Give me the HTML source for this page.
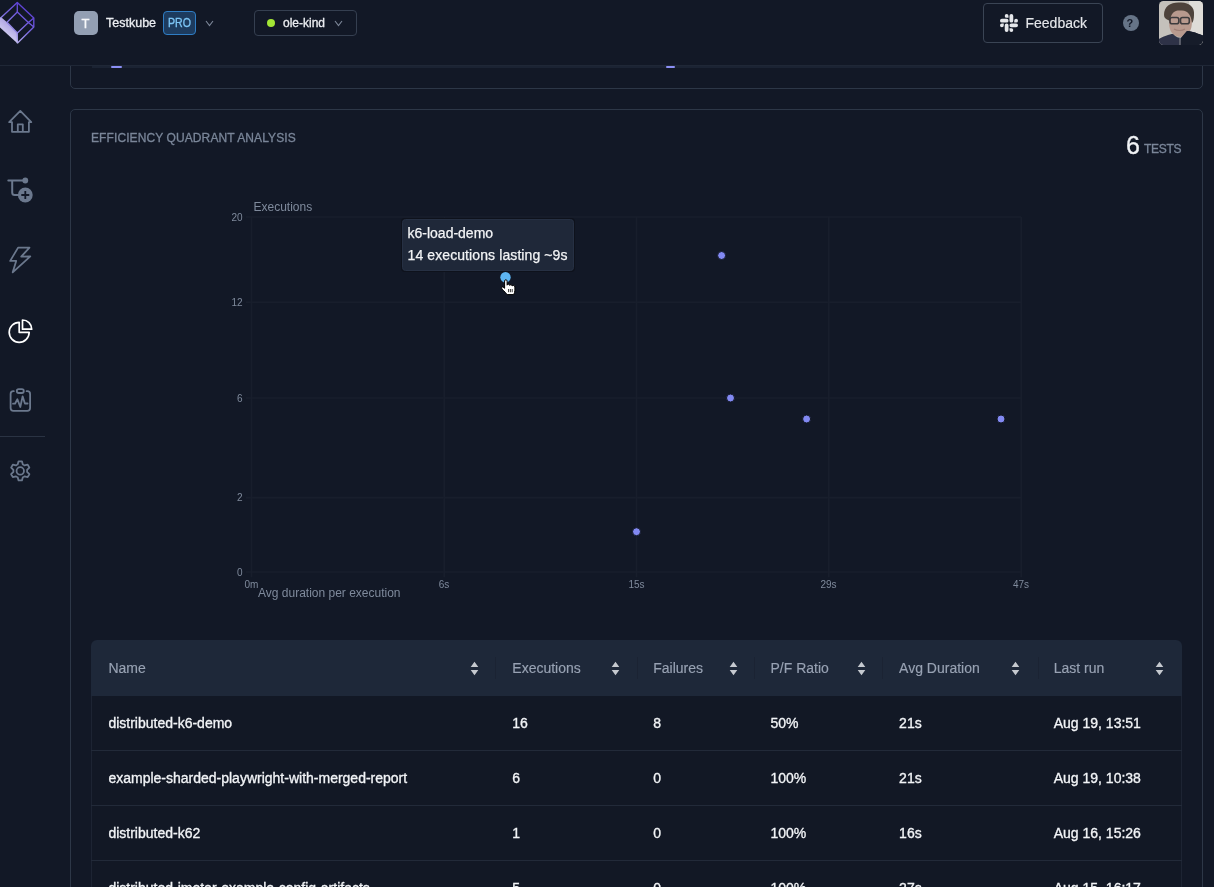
<!DOCTYPE html>
<html><head><meta charset="utf-8">
<style>
*{box-sizing:border-box;margin:0;padding:0}
html,body{width:1214px;height:887px;overflow:hidden;background:#121826;font-family:"Liberation Sans",sans-serif;color:#e5e7eb;-webkit-font-smoothing:antialiased}
#wrap{position:absolute;left:0;top:0;width:1214px;height:887px;will-change:transform}
.abs{position:absolute}
#topbar{position:absolute;left:0;top:0;width:1214px;height:66px;border-bottom:1px solid #232b3a}
.txt{position:absolute;white-space:nowrap;line-height:1}
.md{-webkit-text-stroke:0.3px currentColor}
.sm{-webkit-text-stroke:0.15px currentColor}
.th{top:661px;font-size:14px;color:#98a2b3;-webkit-text-stroke:0.15px currentColor}
.td{font-size:14px;color:#f2f4f7;-webkit-text-stroke:0.32px #f2f4f7}
</style></head>
<body><div id="wrap">
<!-- previous card (cut off) -->
<div class="abs" style="left:70px;top:-20px;width:1133px;height:109px;border:1px solid #2d3747;border-radius:5px"></div>
<div class="abs" style="left:92px;top:66px;width:1088px;height:2px;background:#1b2333"></div>
<div class="abs" style="left:111px;top:66px;width:11px;height:2px;background:#8b8ff5;border-radius:1px"></div>
<div class="abs" style="left:666px;top:66px;width:9px;height:2px;background:#8b8ff5;border-radius:1px"></div>

<!-- top bar -->
<div id="topbar"></div>
<div class="abs" style="left:0;top:0;width:1214px;height:66px;background:#121826;border-bottom:1px solid #1f2736"></div>

<!-- logo -->
<svg class="abs" style="left:0;top:0" width="40" height="48" viewBox="0 0 40 48">
  <defs>
    <linearGradient id="lg1" gradientUnits="userSpaceOnUse" x1="32" y1="8" x2="6" y2="40">
      <stop offset="0" stop-color="#5535d2"/><stop offset="0.55" stop-color="#7e6fe0"/><stop offset="1" stop-color="#c9c4ef"/>
    </linearGradient>
    <linearGradient id="lg2" gradientUnits="userSpaceOnUse" x1="14" y1="24" x2="4" y2="36">
      <stop offset="0" stop-color="#a89ce0"/><stop offset="1" stop-color="#d6d3f3"/>
    </linearGradient>
  </defs>
  <path d="M-1,17.2 L1.2,17.2 L7,22.2 L17.3,33 L17.3,43.3 L-1,26.6 Z" fill="url(#lg2)"/>
  <g fill="none" stroke="url(#lg1)" stroke-width="1.35" stroke-linejoin="round">
    <path d="M0.6,17.9 L17.3,2.4 L33.8,17.9 L33.8,27 L17.3,43.3"/>
    <path d="M17.3,11.9 L28.4,22.6 L17.3,33 L7,22.2 Z"/>
    <path d="M17.3,2.4 V11.9 M28.4,22.6 L33.8,17.9 M28.4,22.6 L33.8,27 M17.3,33 V43.3"/>
  </g>
</svg>

<!-- org -->
<div class="abs" style="left:74px;top:11px;width:24px;height:24px;background:#939fb3;border-radius:5px"></div>
<div class="txt md" style="left:81.5px;top:17px;font-size:13px;color:#f7f8fa">T</div>
<div class="txt md" style="left:106px;top:17px;font-size:12.5px;color:#eceef2">Testkube</div>
<div class="abs" style="left:163px;top:11px;width:33px;height:24px;background:#1d3b5e;border:1px solid #2f7dc4;border-radius:4px"></div>
<div class="txt md" style="left:168px;top:17px;font-size:12px;color:#7cc4f4;transform:scaleX(0.885);transform-origin:0 0">PRO</div>
<svg class="abs" style="left:204px;top:18px" width="11" height="10" viewBox="0 0 11 10"><path d="M2,3 L5.5,7.5 L9,3" fill="none" stroke="#7d8799" stroke-width="1.1"/></svg>

<!-- env -->
<div class="abs" style="left:254px;top:10px;width:103px;height:26px;border:1px solid #353f50;border-radius:4px"></div>
<div class="abs" style="left:267px;top:19px;width:8px;height:8px;background:#a3e635;border-radius:50%"></div>
<div class="txt md" style="left:283px;top:16.5px;font-size:12px;color:#eceef2">ole-kind</div>
<svg class="abs" style="left:333px;top:18px" width="11" height="10" viewBox="0 0 11 10"><path d="M2,3 L5.5,7.5 L9,3" fill="none" stroke="#7d8799" stroke-width="1.1"/></svg>

<!-- feedback -->
<div class="abs" style="left:983px;top:3px;width:120px;height:40px;border:1px solid #3a4454;border-radius:4px"></div>
<svg class="abs" style="left:1000px;top:14px" width="18" height="18" viewBox="0 0 24 24"><path fill="#e5e7eb" d="M5.042 15.165a2.528 2.528 0 0 1-2.52 2.523A2.528 2.528 0 0 1 0 15.165a2.527 2.527 0 0 1 2.522-2.52h2.52v2.52zM6.313 15.165a2.527 2.527 0 0 1 2.521-2.52 2.527 2.527 0 0 1 2.521 2.52v6.313A2.528 2.528 0 0 1 8.834 24a2.528 2.528 0 0 1-2.521-2.522v-6.313zM8.834 5.042a2.528 2.528 0 0 1-2.521-2.52A2.528 2.528 0 0 1 8.834 0a2.528 2.528 0 0 1 2.521 2.522v2.52H8.834zM8.834 6.313a2.528 2.528 0 0 1 2.521 2.521 2.528 2.528 0 0 1-2.521 2.521H2.522A2.528 2.528 0 0 1 0 8.834a2.528 2.528 0 0 1 2.522-2.521h6.312zM18.956 8.834a2.528 2.528 0 0 1 2.522-2.521A2.528 2.528 0 0 1 24 8.834a2.528 2.528 0 0 1-2.522 2.521h-2.522V8.834zM17.688 8.834a2.528 2.528 0 0 1-2.523 2.521 2.527 2.527 0 0 1-2.52-2.521V2.522A2.527 2.527 0 0 1 15.165 0a2.528 2.528 0 0 1 2.523 2.522v6.312zM15.165 18.956a2.528 2.528 0 0 1 2.523 2.522A2.528 2.528 0 0 1 15.165 24a2.527 2.527 0 0 1-2.52-2.522v-2.522h2.52zM15.165 17.688a2.527 2.527 0 0 1-2.52-2.523 2.526 2.526 0 0 1 2.52-2.52h6.313A2.527 2.527 0 0 1 24 15.165a2.528 2.528 0 0 1-2.522 2.523h-6.313z"/></svg>
<div class="txt sm" style="left:1025.5px;top:15.5px;font-size:14px;color:#e5e7eb">Feedback</div>

<!-- help -->
<div class="abs" style="left:1122.5px;top:15px;width:16px;height:16px;background:#667487;border-radius:50%"></div>
<div class="txt" style="left:1126.5px;top:17.5px;font-size:11px;font-weight:bold;color:#121826">?</div>

<!-- avatar -->
<svg class="abs" style="left:1159px;top:1px" width="44" height="44" viewBox="0 0 44 44">
  <defs>
    <clipPath id="av"><rect x="0" y="0" width="44" height="44" rx="4.5"/></clipPath>
    <filter id="bl" x="-10%" y="-10%" width="120%" height="120%"><feGaussianBlur stdDeviation="0.6"/></filter>
  </defs>
  <g clip-path="url(#av)">
    <rect width="44" height="44" fill="#c4c1bb"/>
    <rect x="30" y="0" width="14" height="44" fill="#dedcd8"/>
    <g filter="url(#bl)">
    <path d="M10,10 C10,4 16,7 21,7.5 C28,8 33,10 33,20 C33,29 30,35 22,36 C14,36 10,30 10,22 Z" fill="#b89a8e"/>
    <path d="M5,14 C5,5 12,1 21,1.5 C30,1 36,6 35,14 C35,18 34,21 33,22 C32,14 29,9 22,9.5 C16,9 12,11 11,20 L9,19 C7,18 5,17 5,14 Z" fill="#4e433a"/>
    <rect x="11" y="16.5" width="8.8" height="6.2" rx="2" fill="none" stroke="#3d3a3c" stroke-width="1.6"/>
    <rect x="21.5" y="16.5" width="8.8" height="6.2" rx="2" fill="none" stroke="#3d3a3c" stroke-width="1.6"/>
    <path d="M15,28 C18,30 23,30 26,28" stroke="#a07f75" stroke-width="1.2" fill="none"/>
    <path d="M-4,48 L-4,40 C3,36 10,33 14,33 C17,36 20,37 22,37 L28,30 C33,30 40,33 48,36 L48,48 Z" fill="#2d3346"/>
    <path d="M22,37 L28,30 C33,30 40,33 48,36 L48,48 L21,48 Z" fill="#161a2a"/>
    <path d="M21,36 V44" stroke="#8a8a90" stroke-width="1"/>
    </g>
  </g>
</svg>

<!-- sidebar icons -->
<svg class="abs" style="left:0;top:0" width="50" height="500" viewBox="0 0 50 500">
  <g fill="none" stroke="#6b788d" stroke-width="1.8" stroke-linejoin="round" stroke-linecap="round">
    <!-- home -->
    <path d="M12,122.2 H9.2 L20.3,110.9 L31.3,122.2 H28.9 V131.8 H12 Z M17.8,131.8 V124.3 H22.8 V131.8"/>
    <!-- tests+ -->
    <path d="M8.3,180.5 H24 M12.2,180.5 V192.5 Q12.2,195 14.7,195 H19" stroke-width="2"/>
    <!-- lightning -->
    <path d="M18.1,247.6 L29.5,247.6 L21.2,256.6 L30.3,256.3 L12.7,272.3 L16.2,260.9 L10.2,260.9 Z"/>
    <!-- clipboard -->
    <path d="M13.8,391.2 H13.4 Q10.6,391.2 10.6,394 V408 Q10.6,410.8 13.4,410.8 H27.3 Q30.1,410.8 30.1,408 V394 Q30.1,391.2 27.3,391.2 H26.6"/>
    <rect x="16.8" y="389.1" width="7" height="3.9" rx="1.95"/>
    <path d="M13,403.7 H15 L17.4,399.3 L20.3,407 L22.6,396.4 L24.9,403.5 H27.6"/>
    <!-- gear -->
    <path d="M17.67,464.50 L18.57,461.35 L21.93,461.35 L22.83,464.50 A6.9,6.9 0 0 1 24.50,465.46 L27.68,464.66 L29.37,467.58 L27.08,469.94 A6.9,6.9 0 0 1 27.08,471.86 L29.37,474.22 L27.68,477.14 L24.50,476.34 A6.9,6.9 0 0 1 22.83,477.30 L21.93,480.45 L18.57,480.45 L17.67,477.30 A6.9,6.9 0 0 1 16.00,476.34 L12.82,477.14 L11.13,474.22 L13.42,471.86 A6.9,6.9 0 0 1 13.42,469.94 L11.13,467.58 L12.82,464.66 L16.00,465.46 A6.9,6.9 0 0 1 17.67,464.50 Z"/>
    <circle cx="20.25" cy="470.9" r="3.7"/>
  </g>
  <circle cx="25.3" cy="180.5" r="2.9" fill="#6b788d"/>
  <circle cx="25.3" cy="195" r="7.4" fill="#6b788d"/>
  <path d="M25.3,191 V199 M21.3,195 H29.3" stroke="#121826" stroke-width="1.8"/>
  <!-- pie active -->
  <g fill="none" stroke="#ffffff" stroke-width="1.7" stroke-linejoin="round">
    <path d="M19.2,322.3 V332.3 H29.2 A10,10 0 1 1 19.2,322.3 Z"/>
    <path d="M22.5,320 V329.2 H31.7 A9.2,9.2 0 0 0 22.5,320 Z"/>
  </g>
  <rect x="0" y="436" width="45" height="1" fill="#2a3343"/>
</svg>

<!-- chart card -->
<div class="abs" style="left:70px;top:109px;width:1133px;height:800px;border:1px solid #2d3747;border-radius:5px"></div>
<div class="txt md" style="left:91px;top:132px;font-size:12px;letter-spacing:0.1px;color:#7a8699">EFFICIENCY QUADRANT ANALYSIS</div>
<div class="txt md" style="left:1126px;top:133px;font-size:25px;color:#f1f3f6">6</div>
<div class="txt md" style="left:1144px;top:143px;font-size:12px;letter-spacing:-0.3px;color:#7a8699">TESTS</div>

<svg class="abs" style="left:0;top:0" width="1214" height="887" viewBox="0 0 1214 887" font-family="Liberation Sans, sans-serif">
  <g stroke="#181e2c" stroke-width="1.6" fill="none">
    <path d="M246,217 H1021.3 M246,302.2 H1021.3 M246,398 H1021.3 M246,497.6 H1021.3 M246,572 H1021.3"/>
    <path d="M251.5,217 V577.3 M444.2,217 V577.3 M636.5,217 V577.3 M828.7,217 V577.3 M1021.3,217 V577.3"/>
  </g>
  <g fill="#7f8a9c" font-size="10" text-anchor="end">
    <text x="242.5" y="220.5">20</text>
    <text x="242.5" y="305.5">12</text>
    <text x="242.5" y="401.5">6</text>
    <text x="242.5" y="501">2</text>
    <text x="242.5" y="575.5">0</text>
  </g>
  <g fill="#7f8a9c" font-size="10" text-anchor="middle">
    <text x="251.5" y="588">0m</text>
    <text x="444" y="588">6s</text>
    <text x="636.5" y="588">15s</text>
    <text x="828.5" y="588">29s</text>
    <text x="1021" y="588">47s</text>
  </g>
  <text x="253.5" y="211" font-size="12" fill="#7f8a9c">Executions</text>
  <text x="258" y="596.5" font-size="12" fill="#7f8a9c">Avg duration per execution</text>
  <g fill="#8289f2" stroke="#121826" stroke-width="1">
    <circle cx="721.6" cy="255.5" r="4"/>
    <circle cx="730.5" cy="398" r="4"/>
    <circle cx="806.6" cy="419" r="4"/>
    <circle cx="1001" cy="419" r="4"/>
    <circle cx="636.5" cy="531.7" r="4"/>
  </g>
  <circle cx="505.5" cy="277.3" r="5.2" fill="#5db5f2"/>
  <!-- tooltip -->
  <rect x="401" y="218" width="174" height="54" rx="4" fill="#0e121c"/>
  <rect x="402.5" y="219.5" width="171" height="51" rx="3" fill="#1f2839" stroke="#263043" stroke-width="1"/>
  <text x="407.5" y="238" font-size="14" fill="#f3f4f6" stroke="#f3f4f6" stroke-width="0.25">k6-load-demo</text>
  <text x="407.5" y="260" font-size="14" letter-spacing="0.1" fill="#f3f4f6" stroke="#f3f4f6" stroke-width="0.25">14 executions lasting ~9s</text>
  <!-- cursor -->
  <g transform="translate(501,279)">
    <path d="M3.6,2 C3.6,0.3 6.1,0.3 6.1,2 L6.1,6.2 C6.4,4.9 8.6,4.9 8.7,6.4 C9,5.3 11.1,5.4 11.2,7 C11.6,6.1 13.9,6.3 13.9,8 L13.9,11.2 C13.9,13 13.2,14.5 12.7,15.6 L6.2,15.6 C5.2,14.3 3.2,12.3 1.2,10.2 C0.1,9 0.6,7.3 2.2,8.2 L3.6,9.3 Z" fill="#ffffff" stroke="#000" stroke-width="1" stroke-linejoin="round"/>
    <path d="M7.6,10 V13.2 M9.4,10 V13.2 M11.2,10 V13.2" stroke="#000" stroke-width="0.8"/>
  </g>
</svg>

<!-- table -->
<div class="abs" style="left:91px;top:640px;width:1091px;height:56px;background:#1e2839;border-radius:6px 6px 0 0"></div>
<div class="abs" style="left:91px;top:696px;width:1091px;height:200px;background:#121825;border-left:1px solid #1d2433;border-right:1px solid #1d2433"></div>
<div class="abs" style="left:91px;top:750px;width:1091px;height:1px;background:#222a39"></div>
<div class="abs" style="left:91px;top:805px;width:1091px;height:1px;background:#222a39"></div>
<div class="abs" style="left:91px;top:860px;width:1091px;height:1px;background:#222a39"></div>
<!-- table text -->
<div class="txt th" style="left:108.4px">Name</div>
<div class="txt th" style="left:512.3px">Executions</div>
<div class="txt th" style="left:653.2px">Failures</div>
<div class="txt th" style="left:770.5px">P/F Ratio</div>
<div class="txt th" style="left:899.1px">Avg Duration</div>
<div class="txt th" style="left:1053.7px">Last run</div>
<svg class="abs" style="left:469.7px;top:661px" width="9" height="15" viewBox="0 0 9 15"><path d="M4.5,0.8 L8.3,6 H0.7 Z M4.5,14.2 L8.3,9 H0.7 Z" fill="#c5c9cf"/></svg>
<svg class="abs" style="left:610.5px;top:661px" width="9" height="15" viewBox="0 0 9 15"><path d="M4.5,0.8 L8.3,6 H0.7 Z M4.5,14.2 L8.3,9 H0.7 Z" fill="#c5c9cf"/></svg>
<svg class="abs" style="left:728.6px;top:661px" width="9" height="15" viewBox="0 0 9 15"><path d="M4.5,0.8 L8.3,6 H0.7 Z M4.5,14.2 L8.3,9 H0.7 Z" fill="#c5c9cf"/></svg>
<svg class="abs" style="left:856.8px;top:661px" width="9" height="15" viewBox="0 0 9 15"><path d="M4.5,0.8 L8.3,6 H0.7 Z M4.5,14.2 L8.3,9 H0.7 Z" fill="#c5c9cf"/></svg>
<svg class="abs" style="left:1011.4px;top:661px" width="9" height="15" viewBox="0 0 9 15"><path d="M4.5,0.8 L8.3,6 H0.7 Z M4.5,14.2 L8.3,9 H0.7 Z" fill="#c5c9cf"/></svg>
<svg class="abs" style="left:1154.6px;top:661px" width="9" height="15" viewBox="0 0 9 15"><path d="M4.5,0.8 L8.3,6 H0.7 Z M4.5,14.2 L8.3,9 H0.7 Z" fill="#c5c9cf"/></svg>
<div class="abs" style="left:495.0px;top:657px;width:1px;height:22px;background:#1b2333"></div>
<div class="abs" style="left:636.5px;top:657px;width:1px;height:22px;background:#1b2333"></div>
<div class="abs" style="left:754.4px;top:657px;width:1px;height:22px;background:#1b2333"></div>
<div class="abs" style="left:882.1px;top:657px;width:1px;height:22px;background:#1b2333"></div>
<div class="abs" style="left:1037.6px;top:657px;width:1px;height:22px;background:#1b2333"></div>
<div class="txt td" style="left:108.4px;top:715.8px">distributed-k6-demo</div>
<div class="txt td" style="left:512.3px;top:715.8px">16</div>
<div class="txt td" style="left:653.2px;top:715.8px">8</div>
<div class="txt td" style="left:770.5px;top:715.8px">50%</div>
<div class="txt td" style="left:899.1px;top:715.8px">21s</div>
<div class="txt td" style="left:1053.7px;top:715.8px">Aug 19, 13:51</div>
<div class="txt td" style="left:108.4px;top:770.8px">example-sharded-playwright-with-merged-report</div>
<div class="txt td" style="left:512.3px;top:770.8px">6</div>
<div class="txt td" style="left:653.2px;top:770.8px">0</div>
<div class="txt td" style="left:770.5px;top:770.8px">100%</div>
<div class="txt td" style="left:899.1px;top:770.8px">21s</div>
<div class="txt td" style="left:1053.7px;top:770.8px">Aug 19, 10:38</div>
<div class="txt td" style="left:108.4px;top:825.8px">distributed-k62</div>
<div class="txt td" style="left:512.3px;top:825.8px">1</div>
<div class="txt td" style="left:653.2px;top:825.8px">0</div>
<div class="txt td" style="left:770.5px;top:825.8px">100%</div>
<div class="txt td" style="left:899.1px;top:825.8px">16s</div>
<div class="txt td" style="left:1053.7px;top:825.8px">Aug 16, 15:26</div>
<div class="txt td" style="left:108.4px;top:880.8px">distributed-jmeter-example-config-artifacts</div>
<div class="txt td" style="left:512.3px;top:880.8px">5</div>
<div class="txt td" style="left:653.2px;top:880.8px">0</div>
<div class="txt td" style="left:770.5px;top:880.8px">100%</div>
<div class="txt td" style="left:899.1px;top:880.8px">27s</div>
<div class="txt td" style="left:1053.7px;top:880.8px">Aug 15, 16:17</div>
</div></body></html>
